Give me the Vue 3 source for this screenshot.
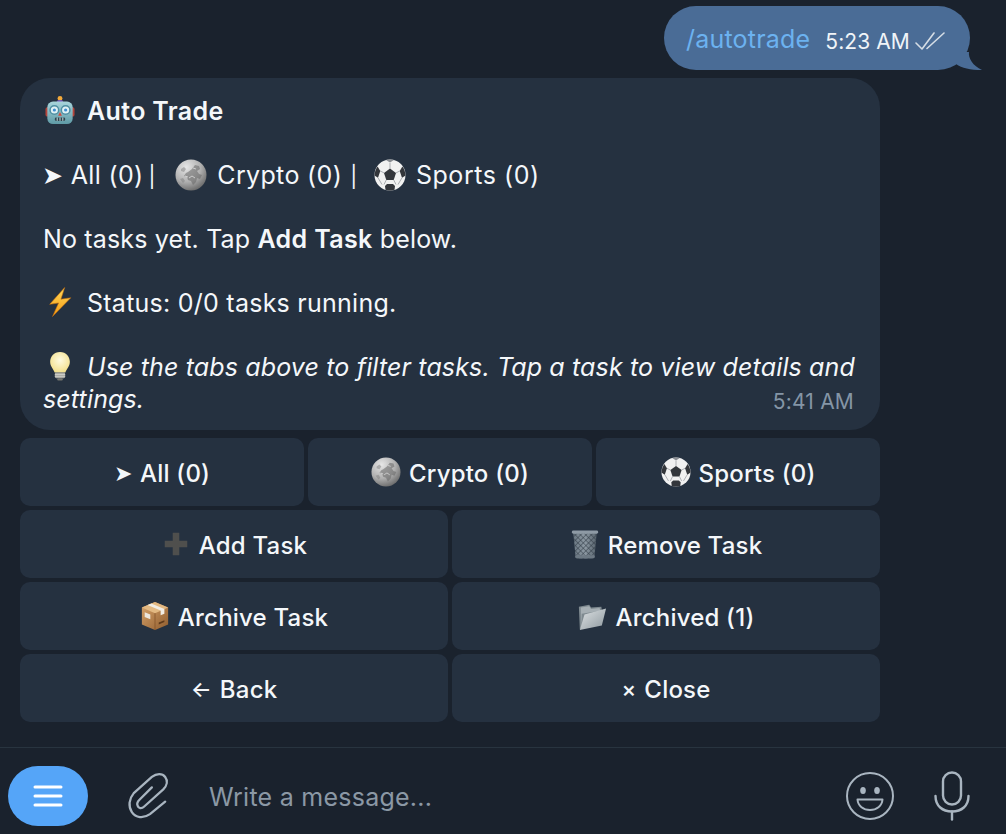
<script setup>
const rows = [
  { cls: 'three', items: [
    { arrow: '➤', label: 'All (0)' },
    { icon: 'coin', label: 'Crypto (0)' },
    { icon: 'ball', label: 'Sports (0)' },
  ] },
  { cls: 'two', items: [
    { icon: 'plus', label: 'Add Task' },
    { icon: 'trash', label: 'Remove Task' },
  ] },
  { cls: 'two', items: [
    { icon: 'box', label: 'Archive Task' },
    { icon: 'folder', label: 'Archived (1)' },
  ] },
  { cls: 'two', items: [
    { arrow: '←', label: 'Back' },
    { arrow: '×', label: 'Close' },
  ] },
]
</script>

<template>
  <div class="chat">
    <svg class="defs" width="0" height="0" aria-hidden="true">
      <defs>
        <radialGradient id="coinG" cx="0.35" cy="0.25" r="0.85">
          <stop offset="0" stop-color="#e6e6e6" />
          <stop offset="0.55" stop-color="#b0b0b0" />
          <stop offset="1" stop-color="#5e5e5e" />
        </radialGradient>
        <linearGradient id="headG" x1="0" y1="0" x2="0" y2="1">
          <stop offset="0" stop-color="#a8d5dc" />
          <stop offset="1" stop-color="#5f9aa6" />
        </linearGradient>
        <linearGradient id="boltG" x1="0" y1="0" x2="0" y2="1">
          <stop offset="0" stop-color="#ffd95a" />
          <stop offset="1" stop-color="#f59a12" />
        </linearGradient>
        <radialGradient id="bulbG" cx="0.5" cy="0.4" r="0.6">
          <stop offset="0" stop-color="#fffbe0" />
          <stop offset="1" stop-color="#f3e08c" />
        </radialGradient>
        <linearGradient id="boxG" x1="0" y1="0" x2="1" y2="1">
          <stop offset="0" stop-color="#d9a56c" />
          <stop offset="1" stop-color="#8f5c2e" />
        </linearGradient>
        <linearGradient id="folderG" x1="0" y1="0" x2="1" y2="1">
          <stop offset="0" stop-color="#dfe3e5" />
          <stop offset="1" stop-color="#8d989e" />
        </linearGradient>
        <linearGradient id="trashG" x1="0" y1="0" x2="1" y2="0">
          <stop offset="0" stop-color="#6a7782" />
          <stop offset="0.5" stop-color="#8d99a3" />
          <stop offset="1" stop-color="#56626c" />
        </linearGradient>
        <pattern id="mesh" width="4" height="4" patternUnits="userSpaceOnUse" patternTransform="rotate(45)">
          <path d="M0 0H4M0 0V4" stroke="#2f3a44" stroke-width="1.1" fill="none" />
        </pattern>

        <symbol id="robot" viewBox="0 0 32 32">
          <circle cx="16" cy="3.6" r="2.6" fill="#f2a93b" />
          <path d="M12.5 8a3.5 2.6 0 0 1 7 0z" fill="#7a5bc0" />
          <rect x="0.5" y="13" width="4" height="10" rx="2" fill="#b5453c" />
          <rect x="27.5" y="13" width="4" height="10" rx="2" fill="#b5453c" />
          <rect x="2.5" y="7" width="27" height="24" rx="6" fill="url(#headG)" />
          <circle cx="10" cy="16" r="4.6" fill="#dff1f5" stroke="#4f8fa3" stroke-width="1.6" />
          <circle cx="22" cy="16" r="4.6" fill="#dff1f5" stroke="#4f8fa3" stroke-width="1.6" />
          <circle cx="10" cy="16" r="1.7" fill="#3f8ed0" />
          <circle cx="22" cy="16" r="1.7" fill="#3f8ed0" />
          <path d="M16 18l2 4h-4z" fill="#d1493f" />
          <rect x="10.5" y="24" width="11" height="3.6" rx="1.4" fill="#2f4650" />
          <path d="M13 24v3.6M16 24v3.6M19 24v3.6" stroke="#cfe4e8" stroke-width="1" />
        </symbol>

        <symbol id="coin" viewBox="0 0 32 32">
          <circle cx="16" cy="16" r="15.5" fill="url(#coinG)" />
          <path d="M13 13l4-3 3-4 4 1 1 3-3 2 2 3 3 1-2 4-3-1-1 4-3 3-2-4-3-1-1-3-3-1 2-3z" fill="#666" opacity="0.55" />
          <path d="M6 10l3-2 2 2-2 3-3-1zM5 20l3-1 2 3-2 2z" fill="#808080" opacity="0.5" />
          <path d="M14 19l3-2 3 2M18 9l3 1M10 17l3 1" stroke="#f0f0f0" stroke-width="0.8" fill="none" opacity="0.8" />
        </symbol>

        <symbol id="ball" viewBox="0 0 32 32">
          <circle cx="16" cy="16" r="15.5" fill="#f1f1f1" />
          <path d="M16 9.500l6 4.400-2.300 7h-7.400l-2.300-7z" fill="#33363b" />
          <path d="M12 1.100c1.300-.4 2.600-.6 4-.6s2.700.2 4 .6L16 3.600z" fill="#8a8d92" />
          <path d="M3.600 7.400C1.700 10 .6 13 .5 16.500l3.500 2.300 2.300-6.800z" fill="#33363b" />
          <path d="M28.400 7.400c1.900 2.600 3 5.600 3.100 9.100L28 18.800 25.700 12z" fill="#33363b" />
          <path d="M11.500 30.800c1.400.5 2.900.7 4.500.7s3.100-.2 4.500-.7l.5-3.800-2-2h-6l-2 2z" fill="#33363b" />
          <path d="M16 4v5.500M10 13.900L6.300 12M22 13.900L25.700 12M12.300 20.900L10 25.500M19.700 20.900L22 25.500M4 18.800L8 25.500M28 18.800L24 25.500" stroke="#8d9096" stroke-width="0.7" />
        </symbol>

        <symbol id="bolt" viewBox="0 0 32 32">
          <path d="M21 .5L5 18.500l9.500-1.500L8 31.500 27.500 11.500 17 13z" fill="url(#boltG)" stroke="#c96f0a" stroke-width="0.6" />
        </symbol>

        <symbol id="bulb" viewBox="0 0 32 32">
          <path d="M16 1C9.400 1 5.500 6 5.500 11.500c0 5 3.500 7.500 4.800 11.500h11.400c1.300-4 4.800-6.500 4.800-11.500C26.500 6 22.600 1 16 1z" fill="url(#bulbG)" />
          <rect x="10.500" y="23" width="11" height="6" rx="1.500" fill="#a7a7a2" />
          <path d="M10.500 25h11M10.500 27h11" stroke="#d9d9d4" stroke-width="0.8" />
          <rect x="13" y="29" width="6" height="2.500" rx="1.200" fill="#75756f" />
        </symbol>

        <symbol id="plus" viewBox="0 0 32 32">
          <path d="M12.500 4h7v8.500H28v7h-8.500V28h-7v-8.500H4v-7h8.500z" fill="#4f4f4d" />
        </symbol>

        <symbol id="trash" viewBox="0 0 32 32">
          <path d="M3.500 4h25l-2.500 26a2 2 0 0 1-2 1.500H8a2 2 0 0 1-2-1.500z" fill="url(#trashG)" />
          <path d="M3.500 4h25l-2.500 26a2 2 0 0 1-2 1.500H8a2 2 0 0 1-2-1.500z" fill="url(#mesh)" />
          <rect x="2" y="1.500" width="28" height="3.500" rx="1.500" fill="#8e9aa5" />
          <rect x="5.500" y="28" width="21" height="3" rx="1.500" fill="#6d7984" />
        </symbol>

        <symbol id="box" viewBox="0 0 32 32">
          <path d="M16 1L2 7v18l14 6 14-6V7z" fill="url(#boxG)" />
          <path d="M2 7l14 6 14-6-14-6z" fill="#e3b982" />
          <path d="M16 13v18" stroke="#7a4a22" stroke-width="0.7" />
          <path d="M8 4.200l14 6v5l4-1.700V8.500L12 2.600z" fill="#f1ede5" />
          <path d="M5 12l6 2.500v5l-6-2.500z" fill="#ece6dc" />
          <path d="M20 23l6-2.500v2l-6 2.500z" fill="#5f3a1a" />
        </symbol>

        <symbol id="folder" viewBox="0 0 32 32">
          <path d="M2 6l11-2 2 3 11-1 1 8L6 28 3 30z" fill="#7f8a90" />
          <path d="M4 7l9-1.500 2 3 9-1 1 3-20 3-.5 14z" fill="#a6afb4" />
          <path d="M8 14.500L31 8l-4.500 18L3 31z" fill="url(#folderG)" />
        </symbol>
      </defs>
    </svg>

    <main class="messages">
      <div class="out-wrap">
        <div class="out">
          <span class="cmd">/autotrade</span>
          <span class="out-time">5:23 AM</span>
          <svg class="ticks" viewBox="0 0 30 20" fill="none" stroke="#d5dde5" stroke-width="1.600" stroke-linecap="round" stroke-linejoin="round">
            <path d="M1 12l6 6L19 2" />
            <path d="M12 17.500L29 2" />
          </svg>
          <svg class="tail" viewBox="0 0 26 18"><path d="M0 0C3 0 8 0 13 0C12 6 17 14 26 18C14 18 6 16 0 12Z" fill="#4a6c96" /></svg>
        </div>
      </div>

      <article class="in">
        <p class="para"><svg class="emoji first"><use href="#robot" /></svg><b class="title">Auto Trade</b></p>
        <p class="para tabs"><span class="arr">➤</span> All (0)<span class="bar one">|</span> <svg class="emoji mid one"><use href="#coin" /></svg>Crypto (0)<span class="bar two">|</span> <svg class="emoji mid"><use href="#ball" /></svg><span class="last-tab">Sports (0)</span></p>
        <p class="para tight">No tasks yet. Tap <b class="title">Add Task</b> below.</p>
        <p class="para"><svg class="emoji first"><use href="#bolt" /></svg>Status: 0/0 tasks running.</p>
        <p class="para last"><svg class="emoji first"><use href="#bulb" /></svg><i class="hint">Use the tabs above to filter tasks. Tap a task to view details and </i><i class="hint">settings.</i><span class="in-time">5:41 AM</span></p>
      </article>

      <section class="keyboard">
        <div v-for="(row, r) in rows" :key="r" class="kb-row" :class="row.cls">
          <button v-for="item in row.items" :key="item.label" class="key" type="button">
            <span v-if="item.arrow" class="key-arrow">{{ item.arrow }}</span>
            <svg v-else class="key-icon"><use :href="'#' + item.icon" /></svg>
            <span>{{ item.label }}</span>
          </button>
        </div>
      </section>
    </main>

    <footer class="composer">
      <button class="menu" type="button" aria-label="Menu">
        <svg viewBox="0 0 30 22" width="30" height="22" stroke="#fff" stroke-width="3" stroke-linecap="round">
          <path d="M2 2h26M2 11h26M2 20h26" />
        </svg>
      </button>
      <svg class="clip" viewBox="0 0 42 48" fill="none" stroke="#a9b5c0" stroke-width="2.400" stroke-linecap="round" stroke-linejoin="round">
        <path d="M38 30L22 43C15 48 7 47 3 41C-1 35 0 27 5 21L24 4C29 0 35 0 38 4C41 8 40 13 36 17L16 35C13 38 10 37 9 34C8 32 9 30 11 28L24 15" />
      </svg>
      <span class="placeholder">Write a message...</span>
      <svg class="smile" viewBox="0 0 48 48" fill="none" stroke="#a9b5c0" stroke-width="2">
        <circle cx="24" cy="24" r="23" />
        <ellipse cx="17" cy="18.500" rx="2.800" ry="3.600" fill="#a9b5c0" stroke="none" />
        <ellipse cx="31" cy="18.500" rx="2.800" ry="3.600" fill="#a9b5c0" stroke="none" />
        <path d="M11.500 27.500h25c-.5 6.500-6 10.500-12.500 10.500s-12-4-12.500-10.500z" stroke-linejoin="round" />
      </svg>
      <svg class="mic" viewBox="0 0 36 50" fill="none" stroke="#a9b5c0" stroke-width="2.400" stroke-linecap="round">
        <rect x="9" y="1.500" width="18" height="32" rx="9" />
        <path d="M1.500 25c0 10 7 15.500 16.500 15.500S34.500 35 34.500 25" />
        <path d="M18 40.500V48.500" />
      </svg>
    </footer>
  </div>
</template>

<style scoped>
.chat {
  width: 1006px;
  height: 834px;
  background: #1a222d;
  display: flex;
  flex-direction: column;
  font-family: Inter, "Liberation Sans", sans-serif;
  color: #f4f7fa;
  overflow: hidden;
}
.defs { position: absolute; }
.messages {
  flex: 1;
  padding: 6px 0 0 20px;
  display: flex;
  flex-direction: column;
}
.out-wrap {
  display: flex;
  justify-content: flex-end;
  padding-right: 36px;
}
.out {
  position: relative;
  width: 306px;
  height: 64px;
  box-sizing: border-box;
  padding-left: 22px;
  background: #4a6c96;
  border-radius: 32px;
  display: flex;
  align-items: center;
}
.cmd {
  font-size: 25px;
  letter-spacing: 0.2px;
  color: #6cb2f0;
  margin-top: 2px;
}
.out-time {
  font-size: 21px;
  margin: 6px 0 0 15px;
  letter-spacing: 0.1px;
  color: #f0f4f8;
}
.ticks {
  width: 30px;
  height: 20px;
  margin: 6px 0 0 5px;
}
.tail {
  position: absolute;
  right: -12px;
  bottom: 0;
  width: 26px;
  height: 18px;
}
.in {
  width: 860px;
  height: 352px;
  box-sizing: border-box;
  margin-top: 8px;
  padding: 17px 22px 15px 23px;
  background: #253140;
  border-radius: 30px;
  font-size: 25px;
  line-height: 32px;
  letter-spacing: 0.25px;
}
.para { margin: 0 0 32px; }
.para.last { margin: 0; }
.tabs { letter-spacing: 0.35px; }
.tight { letter-spacing: 0.16px; }
.hint { letter-spacing: 0.14px; }
.title { font-weight: 600; letter-spacing: 0.35px; }
.arr { font-family: "DejaVu Sans", sans-serif; font-size: 25px; line-height: 0; margin-left: -1px; }
.bar { font-size: 21px; line-height: 0; }
.bar.one { margin-left: 5px; }
.bar.two { margin-left: 8px; }
.last-tab { letter-spacing: 0.55px; }
.emoji {
  display: inline-block;
  width: 30px;
  height: 30px;
  vertical-align: -5px;
}
.emoji.first { margin: 0 12px 0 2px; }
.emoji.mid { width: 32px; height: 32px; vertical-align: -7px; margin: 0 10px 0 9px; }
.emoji.mid.one { margin-left: 12px; }
.in-time {
  float: right;
  margin: 3px 4px 0 0;
  font-size: 21px;
  letter-spacing: 0.2px;
  color: #8495a6;
}
.keyboard {
  width: 860px;
  margin-top: 8px;
  display: flex;
  flex-direction: column;
  gap: 4px;
}
.kb-row {
  display: grid;
  gap: 4px;
  height: 68px;
}
.kb-row.three { grid-template-columns: repeat(3, 1fr); }
.kb-row.two { grid-template-columns: repeat(2, 1fr); }
.key {
  border: 0;
  padding: 2px 0 0;
  background: #253140;
  border-radius: 10px;
  color: #f4f7fa;
  font: 550 24px Inter, "Liberation Sans", sans-serif;
  letter-spacing: 0.2px;
  display: flex;
  align-items: center;
  justify-content: center;
  gap: 8px;
}
.key-icon { width: 30px; height: 30px; margin-top: -2px; }
.key-arrow { font-size: 22px; line-height: 1; }
.composer {
  height: 87px;
  border-top: 1px solid #28343f;
  display: flex;
  align-items: center;
  padding: 10px 0 0 8px;
  box-sizing: border-box;
  color: #a9b5c0;
}
.menu {
  width: 80px;
  height: 60px;
  border: 0;
  padding: 0;
  background: #55a5f8;
  border-radius: 30px;
  display: flex;
  align-items: center;
  justify-content: center;
}
.clip { width: 40px; height: 46px; margin-left: 41px; overflow: visible; }
.placeholder {
  margin: 2px 0 0 40px;
  font-size: 25px;
  letter-spacing: 0.25px;
  color: #8b98a5;
  flex: 1;
}
.smile { width: 48px; height: 48px; }
.mic { width: 36px; height: 50px; margin: 0 36px 0 40px; }
</style>
